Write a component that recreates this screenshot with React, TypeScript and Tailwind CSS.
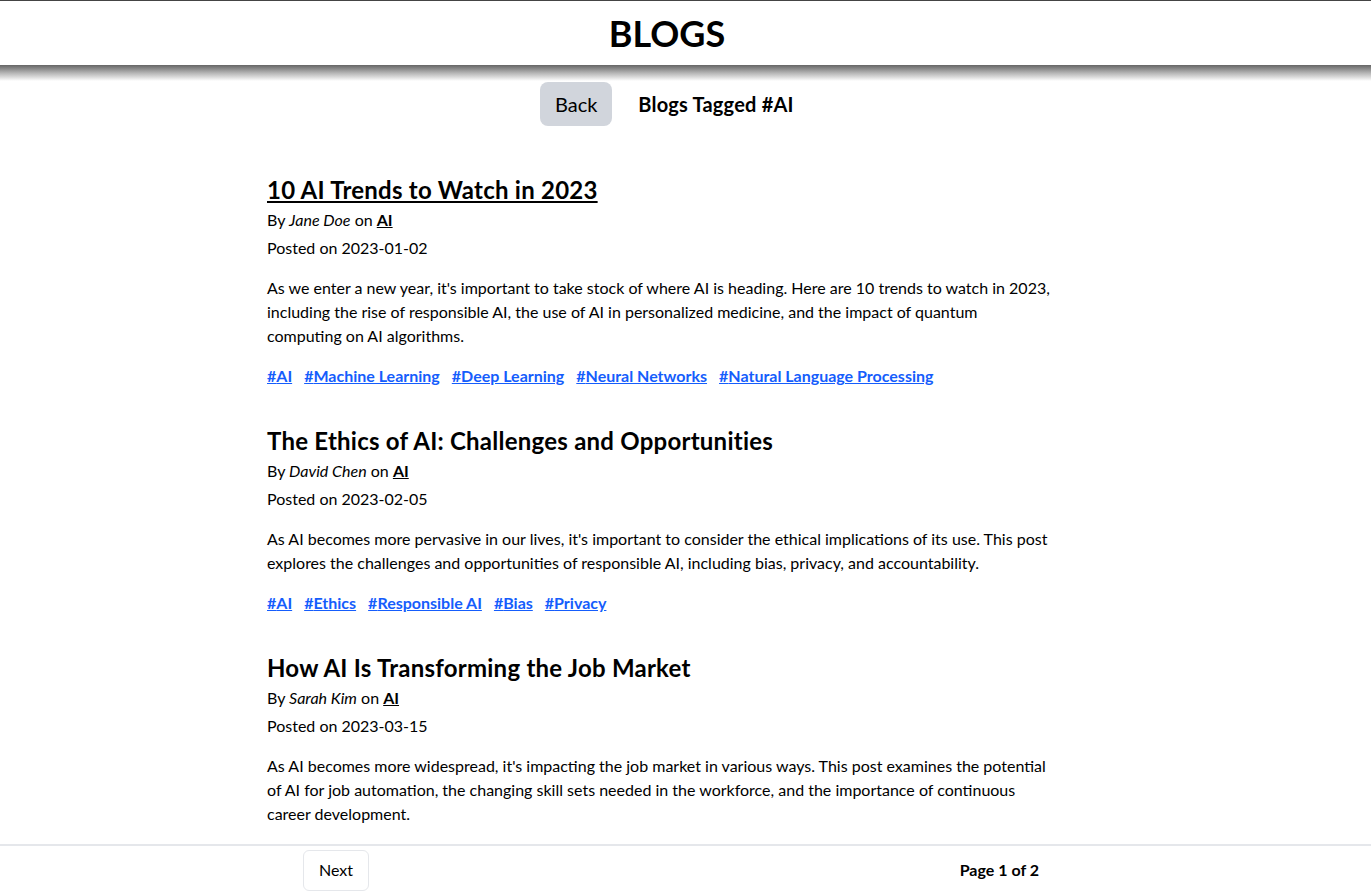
import React from 'react';

// Blog posts shown for the selected tag
const posts = [
  {
    title: '10 AI Trends to Watch in 2023',
    author: 'Jane Doe',
    category: 'AI',
    date: '2023-01-02',
    body: "As we enter a new year, it's important to take stock of where AI is heading. Here are 10 trends to watch in 2023, including the rise of responsible AI, the use of AI in personalized medicine, and the impact of quantum computing on AI algorithms.",
    tags: ['AI', 'Machine Learning', 'Deep Learning', 'Neural Networks', 'Natural Language Processing'],
    underline: true,
  },
  {
    title: 'The Ethics of AI: Challenges and Opportunities',
    author: 'David Chen',
    category: 'AI',
    date: '2023-02-05',
    body: "As AI becomes more pervasive in our lives, it's important to consider the ethical implications of its use. This post explores the challenges and opportunities of responsible AI, including bias, privacy, and accountability.",
    tags: ['AI', 'Ethics', 'Responsible AI', 'Bias', 'Privacy'],
    underline: false,
  },
  {
    title: 'How AI Is Transforming the Job Market',
    author: 'Sarah Kim',
    category: 'AI',
    date: '2023-03-15',
    body: "As AI becomes more widespread, it's impacting the job market in various ways. This post examines the potential of AI for job automation, the changing skill sets needed in the workforce, and the importance of continuous career development.",
    tags: ['AI', 'Automation', 'Jobs', 'Careers'],
    underline: false,
  },
];

const App: React.FC = () => {
  return (
    <div className="min-h-screen bg-white text-black font-['Lato','Liberation_Sans',sans-serif]">
      {/* Header */}
      <header className="border-t border-[#444]">
        <div className="h-16 flex items-center justify-center pr-[37px]">
          <h1 className="text-4xl font-bold">BLOGS</h1>
        </div>
        <div className="h-4 bg-gradient-to-b from-[#666] via-[#b5b5b5] to-white" />
      </header>

      <main className="pr-[37px] pb-24">
        <div className="flex items-center justify-center gap-[26px] mt-[1px]">
          <button className="h-11 w-[72px] rounded-lg bg-gray-300 text-xl">Back</button>
          <h2 className="text-xl font-bold tracking-[0.01em]">Blogs Tagged #AI</h2>
        </div>

        <div className="w-[800px] mx-auto mt-[47px]">
          {posts.map((post) => (
            <article key={post.title} className="mb-9">
              <a
                href="#"
                className={`block text-2xl font-bold leading-[33px] tracking-[0.01em] ${post.underline ? 'underline underline-offset-2' : ''}`}
              >
                {post.title}
              </a>
              <p className="mt-0.5 leading-6">
                By <em>{post.author}</em> on{' '}
                <a href="#" className="font-bold underline">
                  {post.category}
                </a>
              </p>
              <p className="mt-1 leading-6">Posted on {post.date}</p>
              <p className="mt-4 leading-6 w-[786px]">{post.body}</p>
              <div className="mt-4 flex flex-wrap gap-3">
                {post.tags.map((tag) => (
                  <a key={tag} href="#" className="font-bold text-blue-600 underline leading-6">
                    #{tag}
                  </a>
                ))}
              </div>
            </article>
          ))}
        </div>
      </main>

      {/* Footer pagination */}
      <footer className="fixed bottom-0 left-0 w-full h-[50px] bg-white border-t-2 border-gray-200 pr-[29px]">
        <div className="w-[736px] mx-auto h-full flex items-center justify-between">
          <button className="h-[41px] w-[66px] bg-white border border-gray-200 rounded-md">Next</button>
          <span className="font-bold">Page 1 of 2</span>
        </div>
      </footer>
    </div>
  );
};

export default App;
